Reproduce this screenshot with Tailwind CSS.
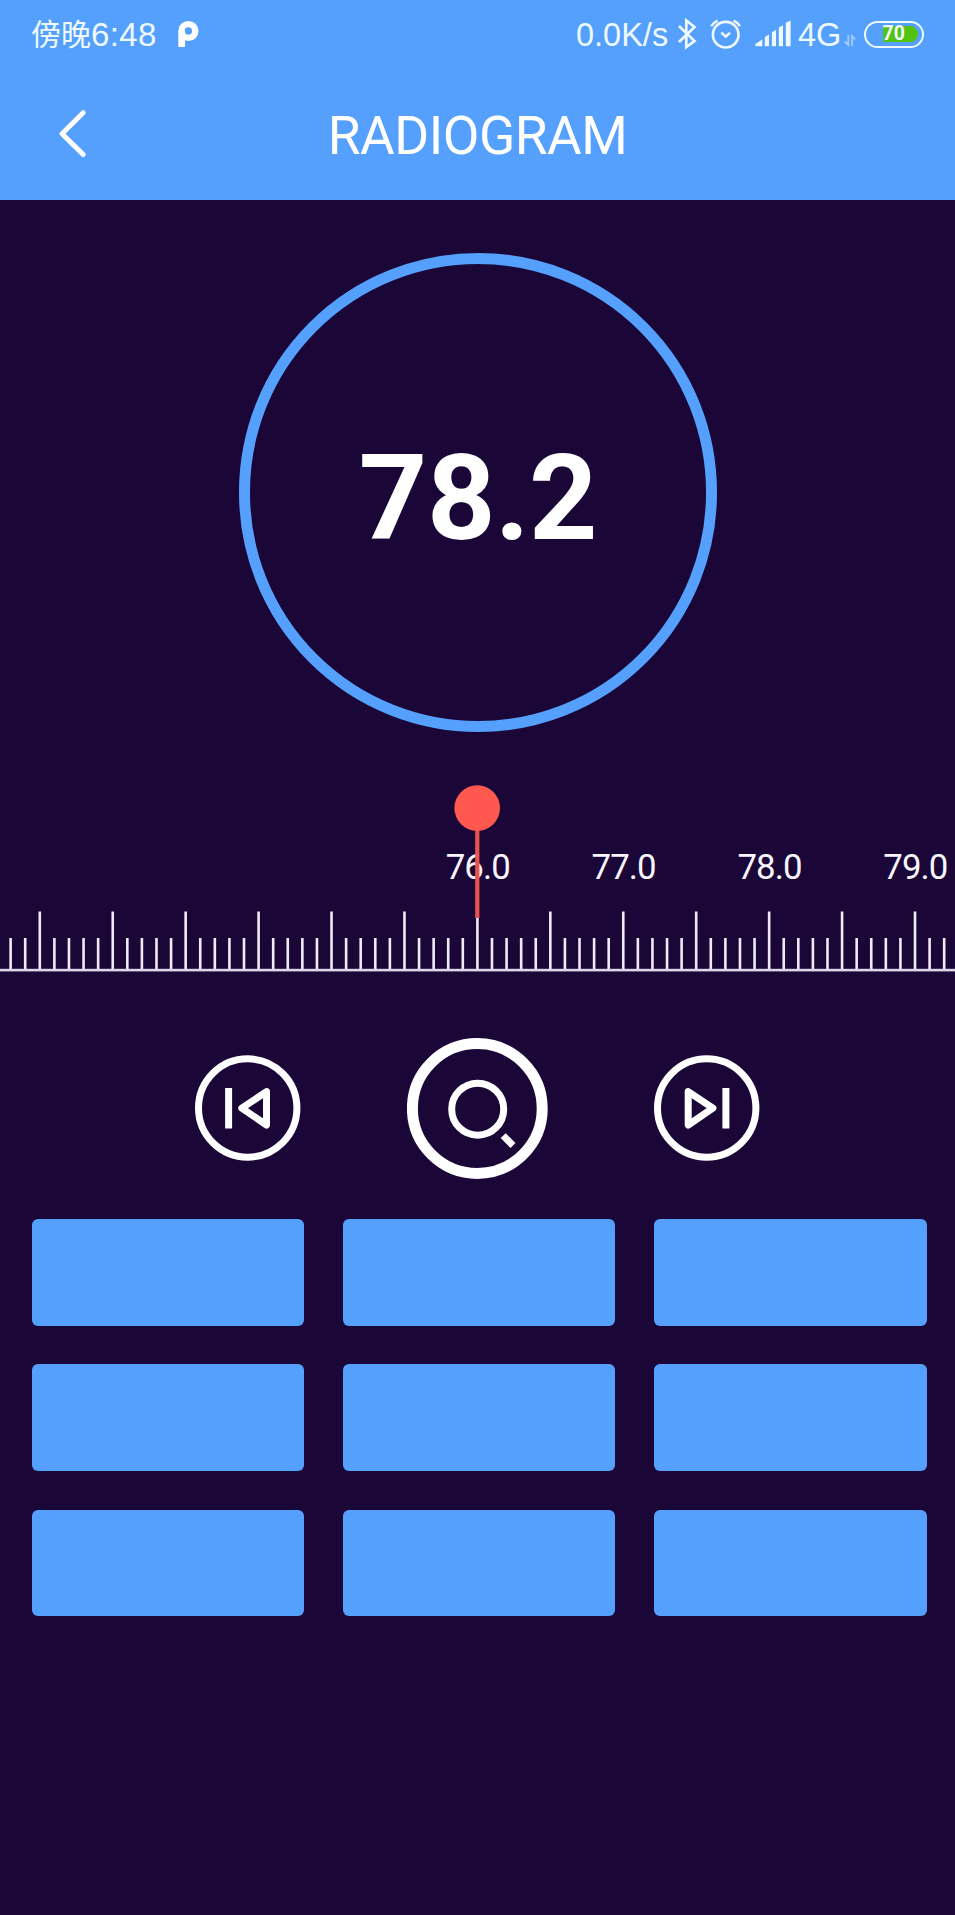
<!DOCTYPE html>
<html lang="zh">

<head>
	<meta charset="UTF-8" />
	<meta name="viewport" content="width=device-width, initial-scale=1.0" />
	<title>Radiogram</title>
	<script src="https://cdn.jsdelivr.net/npm/@tailwindcss/browser@4"></script>
</head>

<body class="bg-[#1a0737] text-white min-h-screen overflow-hidden font-['Roboto','Noto_Sans_CJK_SC',sans-serif]">
	<header class="h-[200px] bg-[#559ffd]">
		<!-- Status bar -->
		<div class="h-[68px] pl-[31px] pr-[31px] flex items-center text-[#eefaff]">
			<span class="text-[30px] leading-[68px] whitespace-nowrap w-[60px] mt-[2px]">傍晚</span>
			<span class="text-[33px] leading-[68px] font-['Liberation_Sans',sans-serif] tracking-[0.4px] whitespace-nowrap w-[87px] mt-[2px]">6:48</span>
			<svg class="w-[21px] h-[28px]" viewBox="0 0 21 28" fill="none">
				<circle cx="10.4" cy="11" r="6.9" stroke="#fff" stroke-width="6.4" />
				<rect x="0.3" y="11" width="6.8" height="16" rx="0.8" fill="#fff" />
			</svg>

			<div class="ml-auto flex items-center">
				<span class="text-[32.5px] leading-[68px] font-['Liberation_Sans',sans-serif] whitespace-nowrap w-[101px] mt-[2px]">0.0K/s</span>
				<svg class="w-[20px] h-[32px] mr-[13px]" viewBox="677 18 20 32" fill="none" stroke="currentColor" stroke-width="2.7">
					<path d="M679 26L694.5 41L686.3 47V20.5L694.5 27L679 42" />
				</svg>
				<svg class="w-[32px] h-[32px] mr-[13px]" viewBox="710 18 32 32" fill="none" stroke="currentColor" stroke-width="2.6">
					<circle cx="725.7" cy="34.7" r="12.8" />
					<path d="M711.3 26.2Q713.5 22.5 717.6 20.6M733.6 20.6Q737.8 22.5 740 26.2M721.3 32.5L725.7 36.6L730 32.7" />
				</svg>
				<svg class="w-[37px] h-[32px] mr-[6px]" viewBox="755 18 37 32" fill="currentColor">
					<path d="M755.3 46.3V44L762.3 39.6V46.3ZM764.8 46.3V37L769 34.6V46.3ZM771.9 46.3V32.3L776 30V46.3ZM778.8 46.3V27.5L783 25.2V46.3ZM785.8 46.3V22.8L790.6 20.6V46.3Z" />
				</svg>
				<span class="text-[32.5px] leading-[68px] font-['Liberation_Sans',sans-serif] whitespace-nowrap w-[46px] mt-[2px]">4G</span>
				<svg class="w-[12px] h-[14px] mt-3 mr-[8px] opacity-50" viewBox="844 33 12 14" fill="none" stroke="currentColor" stroke-width="1.8">
					<path d="M848.3 35V45L844.7 41.5M852 46V36L855.3 39.5" />
				</svg>
				<!-- Battery -->
				<div class="relative w-[60px] h-[27px] border-[2.7px] border-current rounded-full">
					<div class="absolute left-[17px] top-[3px] w-[35px] h-[16px] bg-[#53c211] rounded-r-full"></div>
					<span class="absolute left-[16.5px] top-[0.5px] text-[19.5px] leading-[22px] font-bold">70</span>
				</div>
			</div>
		</div>

		<!-- Title bar -->
		<div class="h-[132px] grid grid-cols-[100px_1fr_100px] items-center">
			<svg class="w-[30px] h-[50px] ml-[58px]" viewBox="58 109 30 50" fill="none" stroke="#fff" stroke-width="5" stroke-linecap="round" stroke-linejoin="round">
				<path d="M83.2 112.7L62 133.7L83.2 154.5" />
			</svg>
			<h1 class="text-[53.3px] leading-[60px] tracking-[-0.5px] text-center mt-[4px]">RADIOGRAM</h1>
		</div>
	</header>

	<main>
		<!-- Current frequency -->
		<div class="mx-auto mt-[53px] w-[478px] h-[479px] rounded-full border-[11px] border-[#559ffd] flex items-center justify-center">
			<span class="text-[119.5px] leading-none font-bold tracking-[-0.5px] pt-[12px] pl-[1px]">78.2</span>
		</div>

		<!-- Tuning scale -->
		<svg class="block w-full h-[198px] mt-[48px]" viewBox="0 780 955 198">
			<g id="ticks" fill="#f1eaf8"></g>
			<rect x="0" y="968.8" width="955" height="2.6" fill="#dfd5ea" />
			<g id="labels" class="tracking-[-0.9px]" fill="#f8f4fc" font-size="34.8" text-anchor="middle"></g>
			<rect x="475.2" y="825" width="4.2" height="93" fill="#e9544f" />
			<circle cx="477.2" cy="808.1" r="22.8" fill="#ff584f" />
		</svg>

		<!-- Controls -->
		<div class="mt-[60px] pl-[195px] pr-[195px] h-[141px] flex items-center justify-between">
			<button type="button" class="-mt-px">
				<svg class="w-[106px] h-[106px]" viewBox="0 0 106 106" fill="none" stroke="#fff" stroke-width="7">
					<circle cx="52.7" cy="53" r="49.2" />
					<path d="M33.6 33V73.5" />
					<path d="M71.5 36.6L46.8 53.2L71.5 70Z" stroke-linejoin="round" stroke-width="7" />
				</svg>
			</button>
			<button type="button">
				<svg class="w-[141px] h-[141px]" viewBox="0 0 141 141" fill="none" stroke="#fff">
					<circle cx="70.3" cy="70.5" r="64.9" stroke-width="11" />
					<circle cx="70.7" cy="71.2" r="26" stroke-width="7" />
					<path d="M96.2 97.6L106 107.5" stroke-width="7" />
				</svg>
			</button>
			<button type="button" class="-mt-px">
				<svg class="w-[106px] h-[106px]" viewBox="0 0 106 106" fill="none" stroke="#fff" stroke-width="7">
					<circle cx="52.7" cy="53" r="49.2" />
					<path d="M71.9 33V73.5" />
					<path d="M34.2 36.6L58.9 53.2L34.2 70Z" stroke-linejoin="round" stroke-width="7" />
				</svg>
			</button>
		</div>

		<!-- Presets -->
		<div class="mt-[40px] ml-[32px] mr-[28.5px] grid grid-cols-3 gap-[38.8px]">
			<div class="h-[106.5px] rounded-md bg-[#559ffd]"></div>
			<div class="h-[106.5px] rounded-md bg-[#559ffd]"></div>
			<div class="h-[106.5px] rounded-md bg-[#559ffd]"></div>
			<div class="h-[106.5px] rounded-md bg-[#559ffd]"></div>
			<div class="h-[106.5px] rounded-md bg-[#559ffd]"></div>
			<div class="h-[106.5px] rounded-md bg-[#559ffd]"></div>
			<div class="h-[106.5px] rounded-md bg-[#559ffd]"></div>
			<div class="h-[106.5px] rounded-md bg-[#559ffd]"></div>
			<div class="h-[106.5px] rounded-md bg-[#559ffd]"></div>
		</div>
	</main>

	<script>
		const ticks = document.getElementById("ticks");
		const labels = document.getElementById("labels");
		const center = 477.4;
		const step = 14.587;

		// One tick per 0.1 MHz, a long one every 0.5
		for (let i = -32; i <= 32; i++) {
			const x = center + i * step;
			const top = i % 5 === 0 ? 911.5 : 938;
			ticks.innerHTML += `<rect x="${x - 1.3}" y="${top}" width="2.6" height="${970 - top}" />`;
		}

		// The band starts at 76.0
		for (let i = 0; i < 4; i++) {
			labels.innerHTML += `<text x="${center + 0.4 + i * step * 10}" y="879.3">${(76 + i).toFixed(1)}</text>`;
		}
	</script>
</body>

</html>
